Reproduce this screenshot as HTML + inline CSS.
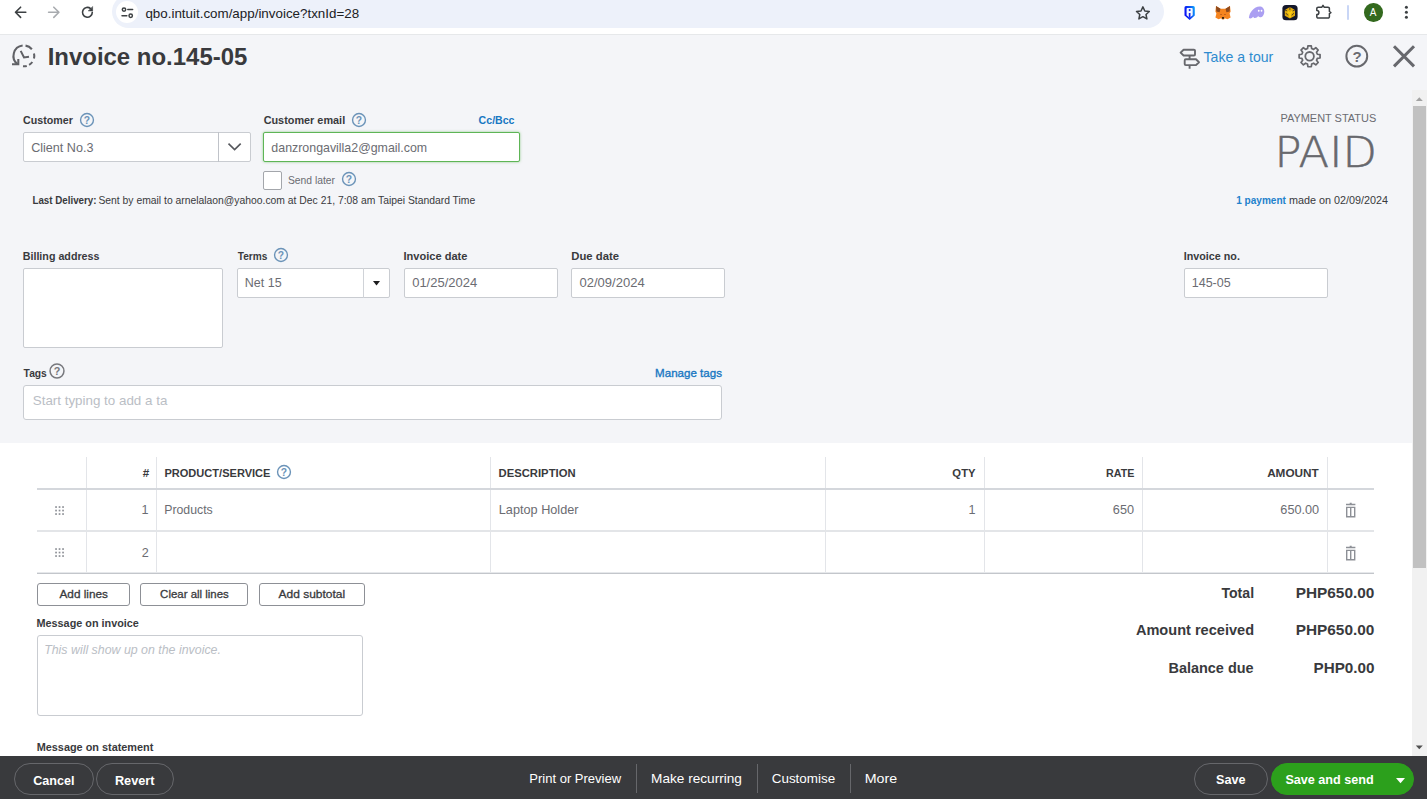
<!DOCTYPE html>
<html lang="en">
<head>
<meta charset="utf-8">
<title>Invoice no.145-05</title>
<style>
*{box-sizing:border-box;margin:0;padding:0}
html,body{width:1427px;height:799px;overflow:hidden;background:#f4f5f8;font-family:"Liberation Sans",sans-serif;color:#393a3d}
.a{position:absolute}
.t{position:absolute;white-space:nowrap;line-height:1;transform-origin:0 0}
svg{position:absolute;overflow:visible}
#chrome{position:absolute;left:0;top:0;width:1427px;height:35px;background:#fff;border-bottom:1px solid #e6e8ea}
#pill{position:absolute;left:112px;top:-5px;width:1052px;height:33px;border-radius:16.5px;background:#edf1fa}
#white{position:absolute;left:0;top:443px;width:1427px;height:313px;background:#fff}
#bar{position:absolute;left:0;top:756px;width:1427px;height:43px;background:#393a3d}
#sb{position:absolute;left:1412px;top:90px;width:15px;height:666px;background:#f1f1f1}
#sbthumb{position:absolute;left:1413px;top:106px;width:12.5px;height:462px;background:#c1c1c1}
.inp{position:absolute;background:#fff;border:1px solid #c9ccd1;border-radius:2px}
.btn{position:absolute;border:1px solid #8d9096;border-radius:3px;background:#fff;height:23px;top:583px}
.pill{position:absolute;top:763px;height:32px;border-radius:16px;border:1px solid #66676b}
.sep{position:absolute;top:764px;width:1px;height:29px;background:#66676b}
.vl{position:absolute;width:1px;background:#e3e5e9;top:457px;height:116px}
.hl{position:absolute;left:37px;width:1337px;height:2px;background:#d4d7dc}
</style>
</head>
<body>
<div id="chrome"><div id="pill"></div>
<div class="a" style="left:116px;top:1px;width:22px;height:22px;border-radius:50%;background:#fff"></div>
<div class="a" style="left:1347px;top:5px;width:2px;height:15px;background:#c9d6f6;border-radius:1px"></div>
<div class="a" style="left:1364px;top:3px;width:18.5px;height:18.5px;border-radius:50%;background:#33691e"></div>
</div>
<svg width="1427" height="34" style="left:0;top:0" fill="none" stroke-linecap="round" stroke-linejoin="round">
 <!-- back -->
 <path d="M25.8 12.3H15.6M20.6 7.2L15.5 12.3L20.6 17.4" stroke="#3c4043" stroke-width="1.6"/>
 <!-- forward -->
 <path d="M48.6 12.3H58.8M53.8 7.2L58.9 12.3L53.8 17.4" stroke="#a8abaf" stroke-width="1.6"/>
 <!-- reload -->
 <path d="M92.3 12.3A4.9 4.9 0 1 1 90.6 8.6" stroke="#3c4043" stroke-width="1.6"/>
 <path d="M92.6 6.9V10.9H88.6Z" fill="#3c4043" stroke="#3c4043" stroke-width="0.6"/>
 <!-- tune -->
 <g stroke="#3c4043" stroke-width="1.5"><circle cx="124" cy="9.6" r="1.7"/><path d="M127.8 9.6H132.6"/><circle cx="130.7" cy="15.8" r="1.7"/><path d="M122 15.8H126.8"/></g>
 <!-- star -->
 <path d="M142.9 6.9l1.9 4.1 4.5.5-3.3 3 .9 4.4-4-2.2-4 2.2.9-4.4-3.3-3 4.5-.5z" transform="translate(1000,0)" stroke="#3c4043" stroke-width="1.5"/>
<defs><linearGradient id="rg" x1="0" y1="0.3" x2="1" y2="0"><stop offset="0" stop-color="#0a10f5"/><stop offset="0.55" stop-color="#0a55f5"/><stop offset="1" stop-color="#12b0fb"/></linearGradient></defs>
 <!-- ronin shield -->
 <path d="M1186 5.9h7.3a1.500 1.500 0 0 1 1.500 1.500v8.200l-5.150 4.500-5.150-4.500v-8.200a1.500 1.500 0 0 1 1.500-1.500z" fill="url(#rg)" stroke="none"/>
 <path d="M1187.400 8.100h4.500a.8.8 0 0 1 .8.8v6.300l-3.050 2.500-3.050-2.500v-6.300a.8.8 0 0 1 .8-.8z" fill="#f4f8ff" stroke="none"/>
 <circle cx="1189.650" cy="10.100" r="1.050" fill="#1330f0" stroke="none"/>
 <path d="M1188.800 12.900h1.700v4.300l-.85.700-.85-.700z" fill="#1020f0" stroke="none"/>
 <!-- metamask -->
 <path d="M1216 6l4.500 2.700h5l4.500-2.700.6 5.500-1 2 1 4-3.100 1.800-2.700-1-.8 1.300h-2l-.8-1.300-2.700 1-3.100-1.800 1-4-1-2z" fill="#f5841f" stroke="none"/>
 <path d="M1216 6l4.500 2.700-.9 3.600-3.300-.7zM1230 6l-4.500 2.700.9 3.600 3.300-.7z" fill="#8e4a1e" stroke="none"/>
 <path d="M1220.300 14.100h1.500v.8h-1.500zM1224.200 14.100h1.500v.8h-1.500z" fill="#b9581c" stroke="none"/>
 <ellipse cx="1223" cy="17.900" rx="1.150" ry=".95" fill="#161616" stroke="none"/>
 <path d="M1222.100 19h1.800l-.3.700h-1.200z" fill="#d9c3b4" stroke="none"/>
 <!-- phantom -->
 <path d="M1248.900 18c.3-5.800 5.300-11.600 10.600-11.600 3 0 4.800 2.100 4.800 5 0 3.200-1.900 5.900-4.300 5.900-.9 0-1.500-.5-1.800-1.200-.7 1.100-1.900 2-3.200 2-.9 0-1.500-.5-1.800-1.300-.9 1.200-2.800 2.300-4.300 1.200z" fill="#ab9ff2" stroke="none"/>
 <rect x="1257.900" y="9.700" width="1.700" height="2.100" rx=".8" fill="#fff" stroke="none"/><rect x="1260.700" y="9.700" width="1.700" height="2.100" rx=".8" fill="#fff" stroke="none"/>
 <!-- black hex -->
 <rect x="1282.400" y="5" width="15.200" height="15.300" rx="3.600" fill="#14172a" stroke="none"/>
 <path d="M1289.900 7l5.100 2.900v5.800l-5.100 2.900-5.100-2.900V9.900z" fill="#e0a90c" stroke="none"/>
 <path d="M1287 10.300l2.900 1.700 2.900-1.700 .5 1.500-2.300 2v3.400h-2.200v-3.400l-2.300-2z" fill="#fbcb12" stroke="none"/>
 <path d="M1289.900 7v2.500M1284.800 9.900l2.200 1M1295 9.900l-2.200 1M1286.300 13.500l1.300 1.500M1293.500 13.500l-1.300 1.500" stroke="#14172a" stroke-width=".7"/>
 <!-- puzzle -->
 <path d="M1318.200 7.200h3.700l1.100-1.900 1.100 1.900h3.900a1.400 1.400 0 0 1 1.400 1.400v2.900l1.500 1.100-1.500 1.100v3a1.400 1.400 0 0 1 -1.400 1.400h-9.800a1.400 1.400 0 0 1 -1.400-1.400v-2.100a2.100 2.100 0 0 0 0-4.200v-1.800a1.400 1.400 0 0 1 1.400-1.400z" stroke="#3c4043" stroke-width="1.500" stroke-linejoin="round"/>
 <!-- dots -->
 <g fill="#3c4043" stroke="none"><circle cx="1406.400" cy="7.300" r="1.500"/><circle cx="1406.400" cy="12.300" r="1.500"/><circle cx="1406.400" cy="17.300" r="1.500"/></g>
</svg>

<!-- QBO header icons -->
<svg width="1427" height="45" style="left:0;top:36px" fill="none" stroke="#67686d" stroke-linecap="butt" stroke-linejoin="miter">
 <g transform="translate(0,-36)">
 <!-- history icon -->
 <g stroke="#606166">
 <path d="M22.63 45.58A10.40 10.40 0 0 0 17.64 64.21 M25.53 45.63A10.40 10.40 0 0 1 31.87 49.22 M33.99 53.38A10.40 10.40 0 0 1 33.99 58.42 M32.31 62.01A10.40 10.40 0 0 1 29.10 64.91 M26.77 65.90A10.40 10.40 0 0 1 22.99 66.26" stroke-width="2.05"/>
 <path d="M12.00 64.20H18.30V59.00" stroke-width="2.05"/>
 <path d="M20.7 50.9L24.0 57.5L29.0 56.7" stroke-width="2.0"/>
 </g>
 <!-- signpost -->
 <g stroke-width="1.9" stroke-linejoin="round">
 <path d="M1183.6 49.7h10.3a1.1 1.1 0 0 1 1.1 1.1v3.6a1.1 1.1 0 0 1 -1.1 1.1h-10.3l-3.0-2.9z"/>
 <path d="M1185.8 59.3h10.2l3.0 2.9-3.0 2.9h-10.2a1.1 1.1 0 0 1 -1.1 -1.1v-3.6a1.1 1.1 0 0 1 1.1 -1.1z"/>
 <path d="M1189.6 55.5v3.8M1189.6 65.1v3.6"/>
 </g>
 <!-- gear -->
 <g transform="translate(1309.600,56.300)">
  <circle r="4.300" stroke-width="1.800"/>
  <path id="gearp" stroke-width="1.700" stroke-linejoin="round" d="M-2.06 -7.73 L-1.69 -10.46 L1.69 -10.46 L2.06 -7.73 L4.01 -6.92 L6.21 -8.59 L8.59 -6.21 L6.92 -4.01 L7.73 -2.06 L10.46 -1.69 L10.46 1.69 L7.73 2.06 L6.92 4.01 L8.59 6.21 L6.21 8.59 L4.01 6.92 L2.06 7.73 L1.69 10.46 L-1.69 10.46 L-2.06 7.73 L-4.01 6.92 L-6.21 8.59 L-8.59 6.21 L-6.92 4.01 L-7.73 2.06 L-10.46 1.69 L-10.46 -1.69 L-7.73 -2.06 L-6.92 -4.01 L-8.59 -6.21 L-6.21 -8.59 L-4.01 -6.92Z"/>
 </g>
 <!-- help big -->
 <circle cx="1356.800" cy="56.200" r="10.400" stroke-width="2"/>
 <!-- close -->
 <path d="M1394.000 46.300L1414.000 66.400M1414.000 46.300L1394.000 66.400" stroke-width="3"/>
 </g>
</svg>
<div class="t" style="left:1352.6px;top:48.600px;font-size:15px;font-weight:bold;color:#6b6c72">?</div>

<!-- form boxes -->
<div class="inp" style="left:23px;top:132px;width:228px;height:30px"></div>
<div class="a" style="left:217.500px;top:132px;width:1.500px;height:30px;background:#c0c3c9"></div>
<svg width="14" height="8" style="left:227.500px;top:143px" fill="none" stroke="#55575c" stroke-width="1.600"><path d="M0.500 0.700L6.600 6.600L12.700 0.700"/></svg>
<div class="inp" style="left:263px;top:132px;width:256.500px;height:30px;border:1px solid #5eb556;box-shadow:0 0 2.5px rgba(94,181,86,.7)"></div>
<div class="inp" style="left:263px;top:171px;width:19px;height:19px;border-color:#a3a6ab"></div>
<div class="inp" style="left:23px;top:268px;width:200px;height:80px"></div>
<div class="inp" style="left:237px;top:268px;width:153px;height:30px"></div>
<div class="a" style="left:362.500px;top:268px;width:1.300px;height:30px;background:#d0d3d8"></div>
<svg width="8" height="5" style="left:372.500px;top:280.600px"><path d="M0 0H7L3.500 4.400Z" fill="#1d1d1f"/></svg>
<div class="inp" style="left:404px;top:268px;width:153.500px;height:30px"></div>
<div class="inp" style="left:571px;top:268px;width:154px;height:30px"></div>
<div class="inp" style="left:1184px;top:268px;width:144px;height:30px"></div>
<div class="inp" style="left:23px;top:385px;width:699px;height:34.500px;border-radius:3px"></div>

<!-- help icons -->
<svg width="18" height="18" style="left:78.10px;top:110.70px"><circle cx="9" cy="9" r="6.45" fill="none" stroke="#6b93b8" stroke-width="1.40"/><text x="9" y="12.80" text-anchor="middle" font-family="Liberation Sans, sans-serif" font-size="10.3" font-weight="bold" fill="#6b93b8">?</text></svg>
<svg width="18" height="18" style="left:349.50px;top:110.80px"><circle cx="9" cy="9" r="6.45" fill="none" stroke="#6b93b8" stroke-width="1.40"/><text x="9" y="12.80" text-anchor="middle" font-family="Liberation Sans, sans-serif" font-size="10.3" font-weight="bold" fill="#6b93b8">?</text></svg>
<svg width="18" height="18" style="left:339.80px;top:170.30px"><circle cx="9" cy="9" r="6.45" fill="none" stroke="#6b93b8" stroke-width="1.40"/><text x="9" y="12.80" text-anchor="middle" font-family="Liberation Sans, sans-serif" font-size="10.3" font-weight="bold" fill="#6b93b8">?</text></svg>
<svg width="18" height="18" style="left:272.20px;top:246.40px"><circle cx="9" cy="9" r="6.45" fill="none" stroke="#6b93b8" stroke-width="1.40"/><text x="9" y="12.80" text-anchor="middle" font-family="Liberation Sans, sans-serif" font-size="10.3" font-weight="bold" fill="#6b93b8">?</text></svg>
<svg width="18" height="18" style="left:48.25px;top:362.00px"><circle cx="9" cy="9" r="6.95" fill="none" stroke="#77787d" stroke-width="1.50"/><text x="9" y="12.80" text-anchor="middle" font-family="Liberation Sans, sans-serif" font-size="10.8" font-weight="bold" fill="#77787d">?</text></svg>

<div id="white"></div>
<svg width="18" height="18" style="left:275.00px;top:463.00px"><circle cx="9" cy="9" r="6.45" fill="none" stroke="#6b93b8" stroke-width="1.40"/><text x="9" y="12.80" text-anchor="middle" font-family="Liberation Sans, sans-serif" font-size="10.3" font-weight="bold" fill="#6b93b8">?</text></svg>
<!-- table -->
<div class="vl" style="left:86px"></div><div class="vl" style="left:156px"></div><div class="vl" style="left:490px"></div><div class="vl" style="left:825px"></div><div class="vl" style="left:983.500px"></div><div class="vl" style="left:1141.500px"></div><div class="vl" style="left:1326.500px"></div>
<div class="hl" style="top:488px"></div><div class="hl" style="top:530px;background:#e3e5e8"></div><div class="hl" style="top:572px;height:1px;background:#e6e8eb"></div><div class="hl" style="top:573px;height:1px;background:#c3c6cb"></div>
<svg width="10" height="10" style="left:55.300px;top:506.100px" fill="#8d9096"><g id="dots"><rect x="0.200" y="0.200" width="1.700" height="1.700"/><rect x="3.700" y="0.200" width="1.700" height="1.700"/><rect x="7.200" y="0.200" width="1.700" height="1.700"/><rect x="0.200" y="3.700" width="1.700" height="1.700"/><rect x="3.700" y="3.700" width="1.700" height="1.700"/><rect x="7.200" y="3.700" width="1.700" height="1.700"/><rect x="0.200" y="7.200" width="1.700" height="1.700"/><rect x="3.700" y="7.200" width="1.700" height="1.700"/><rect x="7.200" y="7.200" width="1.700" height="1.700"/></g></svg>
<svg width="10" height="10" style="left:55.300px;top:548.300px" fill="#8d9096"><rect x="0.200" y="0.200" width="1.700" height="1.700"/><rect x="3.700" y="0.200" width="1.700" height="1.700"/><rect x="7.200" y="0.200" width="1.700" height="1.700"/><rect x="0.200" y="3.700" width="1.700" height="1.700"/><rect x="3.700" y="3.700" width="1.700" height="1.700"/><rect x="7.200" y="3.700" width="1.700" height="1.700"/><rect x="0.200" y="7.200" width="1.700" height="1.700"/><rect x="3.700" y="7.200" width="1.700" height="1.700"/><rect x="7.200" y="7.200" width="1.700" height="1.700"/></svg>
<svg width="10" height="15" style="left:1346px;top:503.200px" fill="none" stroke="#8d9096"><path d="M0 1.600H9.400M3.700 0.500H5.700" stroke-width="1.500"/><path d="M0.700 4.400H8.700V13.800H0.700ZM4.700 4.400V13.800" stroke-width="1.400"/></svg>
<svg width="10" height="15" style="left:1346px;top:545.600px" fill="none" stroke="#8d9096"><path d="M0 1.600H9.400M3.700 0.500H5.700" stroke-width="1.500"/><path d="M0.700 4.400H8.700V13.800H0.700ZM4.700 4.400V13.800" stroke-width="1.400"/></svg>

<div class="btn" style="left:37px;width:93px"></div>
<div class="btn" style="left:140px;width:108px"></div>
<div class="btn" style="left:258.500px;width:106px"></div>
<div class="inp" style="left:37px;top:635px;width:325.500px;height:80.500px;border-radius:3px"></div>

<div id="sb"></div><div id="sbthumb"></div>
<svg width="15" height="10" style="left:1412px;top:95px"><path d="M3.800 6.100H10.800L7.300 2.300Z" fill="#a3a3a3"/></svg>
<svg width="15" height="10" style="left:1412px;top:743px"><path d="M3.800 2.500H10.800L7.300 6.300Z" fill="#505050"/></svg>
<div id="bar"></div>
<div class="pill" style="left:14px;width:79.500px"></div>
<div class="pill" style="left:95.500px;width:78px"></div>
<div class="sep" style="left:636px"></div>
<div class="sep" style="left:756.500px"></div>
<div class="sep" style="left:849.500px"></div>
<div class="pill" style="left:1193.500px;width:74.500px"></div>
<div class="pill" style="left:1271px;width:142.500px;background:#2ca01c;border-color:#2ca01c"></div>
<svg width="10" height="6" style="left:1396px;top:778px"><path d="M0 0H9L4.500 5.300Z" fill="#fff"/></svg>
<div class="t" id="url" style="left:145px;top:7px;font-size:13.2px;color:#202124;transform:translateX(0.39px) scaleX(1.0140);">qbo.intuit.com/app/invoice?txnId=28</div>
<div class="t" id="title" style="left:47px;top:46px;font-size:23.2px;color:#393a3d;font-weight:bold;transform:translateX(0.63px) scaleX(1.0332);">Invoice no.145-05</div>
<div class="t" id="tour" style="left:1203px;top:50px;font-size:14.3px;color:#2e8bcf;transform:translateX(0.49px) scaleX(0.9866);">Take a tour</div>
<div class="t" id="l_cust" style="left:23px;top:115px;font-size:11.2px;color:#393a3d;font-weight:bold;transform:translateX(0.03px) scaleX(0.9543);">Customer</div>
<div class="t" id="v_cust" style="left:31px;top:142px;font-size:12.6px;color:#6b6c72;transform:translateX(0.13px) scaleX(0.9997);">Client No.3</div>
<div class="t" id="l_email" style="left:263px;top:115px;font-size:11.2px;color:#393a3d;font-weight:bold;transform:translateX(0.64px) scaleX(0.9711);">Customer email</div>
<div class="t" id="ccbcc" style="left:478px;top:115px;font-size:11.2px;color:#1877c2;font-weight:bold;transform:translateX(0.61px) scaleX(0.9459);">Cc/Bcc</div>
<div class="t" id="v_email" style="left:271px;top:142px;font-size:12.4px;color:#6b6c72;transform:translateX(0.36px) scaleX(0.9998);">danzrongavilla2@gmail.com</div>
<div class="t" id="sendlater" style="left:287px;top:176px;font-size:10.4px;color:#6b6c72;transform:translateX(0.98px) scaleX(0.9934);">Send later</div>
<div class="t" id="lastdel" style="left:32px;top:196px;font-size:10.4px;color:#393a3d;font-weight:bold;transform:translateX(0.43px) scaleX(0.9408);">Last Delivery:</div>
<div class="t" id="lastdel2" style="left:98px;top:196px;font-size:10.4px;color:#393a3d;transform:translateX(0.42px) scaleX(0.9961);">Sent by email to arnelalaon@yahoo.com at Dec 21, 7:08 am Taipei Standard Time</div>
<div class="t" id="paystat" style="left:1280px;top:112px;font-size:11.7px;color:#6b6c72;transform:translateX(0.39px) scaleX(0.9379);">PAYMENT STATUS</div>
<div class="t" id="paid" style="left:1274px;top:132px;font-size:42.5px;color:#67686d;transform:translateX(0.48px) scaleX(1.0530);font-family:'DejaVu Sans',sans-serif;font-weight:200;-webkit-text-stroke:0.55px #67686d;">PAID</div>
<div class="t" id="payment" style="left:1236px;top:196px;font-size:10.4px;color:#1f82cc;font-weight:bold;transform:translateX(0.18px) scaleX(0.9674);">1 payment</div>
<div class="t" id="payment2" style="left:1288px;top:196px;font-size:10.4px;color:#393a3d;transform:translateX(0.88px) scaleX(1.0396);">made on 02/09/2024</div>
<div class="t" id="l_bill" style="left:22px;top:251px;font-size:11.2px;color:#393a3d;font-weight:bold;transform:translateX(0.70px) scaleX(0.9574);">Billing address</div>
<div class="t" id="l_terms" style="left:237px;top:251px;font-size:11.2px;color:#393a3d;font-weight:bold;transform:translateX(0.72px) scaleX(0.9040);">Terms</div>
<div class="t" id="v_terms" style="left:244px;top:277px;font-size:12.6px;color:#6b6c72;transform:translateX(0.79px) scaleX(0.9923);">Net 15</div>
<div class="t" id="l_invd" style="left:403px;top:251px;font-size:11.2px;color:#393a3d;font-weight:bold;transform:translateX(0.47px) scaleX(0.9886);">Invoice date</div>
<div class="t" id="v_invd" style="left:412px;top:276px;font-size:13px;color:#6b6c72;transform:translateX(0.17px) scaleX(0.9986);">01/25/2024</div>
<div class="t" id="l_due" style="left:571px;top:251px;font-size:11.2px;color:#393a3d;font-weight:bold;transform:translateX(0.26px) scaleX(1.0106);">Due date</div>
<div class="t" id="v_due" style="left:579px;top:276px;font-size:13px;color:#6b6c72;transform:translateX(0.45px) scaleX(1.0016);">02/09/2024</div>
<div class="t" id="l_invno" style="left:1183px;top:251px;font-size:11.2px;color:#393a3d;font-weight:bold;transform:translateX(0.76px) scaleX(0.9611);">Invoice no.</div>
<div class="t" id="v_invno" style="left:1191px;top:276px;font-size:13px;color:#6b6c72;transform:translateX(0.76px) scaleX(0.9617);">145-05</div>
<div class="t" id="l_tags" style="left:23px;top:368px;font-size:11.2px;color:#393a3d;font-weight:bold;transform:translateX(0.62px) scaleX(0.9178);">Tags</div>
<div class="t" id="mtags" style="left:655px;top:368px;font-size:11.8px;color:#1877c2;transform:translateX(0.11px) scaleX(0.9797);-webkit-text-stroke:0.35px #1877c2;">Manage tags</div>
<div class="t" id="ph_tags" style="left:32px;top:394px;font-size:13.3px;color:#babec5;transform:translateX(0.74px) scaleX(1.0060);">Start typing to add a ta</div>
<div class="t" id="h_num" style="left:142px;top:467px;font-size:11.6px;color:#393a3d;font-weight:bold;transform:translateX(0.70px) scaleX(1.0000);">#</div>
<div class="t" id="h_prod" style="left:164px;top:467px;font-size:11.6px;color:#393a3d;font-weight:bold;transform:translateX(0.38px) scaleX(0.9539);">PRODUCT/SERVICE</div>
<div class="t" id="h_desc" style="left:498px;top:467px;font-size:11.6px;color:#393a3d;font-weight:bold;transform:translateX(0.59px) scaleX(0.9710);">DESCRIPTION</div>
<div class="t" id="h_qty" style="left:952px;top:467px;font-size:11.6px;color:#393a3d;font-weight:bold;transform:translateX(0.37px) scaleX(0.9711);">QTY</div>
<div class="t" id="h_rate" style="left:1105px;top:467px;font-size:11.6px;color:#393a3d;font-weight:bold;transform:translateX(0.98px) scaleX(0.9251);">RATE</div>
<div class="t" id="h_amt" style="left:1267px;top:467px;font-size:11.6px;color:#393a3d;font-weight:bold;transform:translateX(0.13px) scaleX(1.0141);">AMOUNT</div>
<div class="t" id="r1_num" style="left:141px;top:504px;font-size:12.6px;color:#6b6c72;transform:translateX(0.44px) scaleX(1.0000);">1</div>
<div class="t" id="r1_prod" style="left:164px;top:504px;font-size:12.6px;color:#6b6c72;transform:translateX(0.26px) scaleX(0.9752);">Products</div>
<div class="t" id="r1_desc" style="left:498px;top:504px;font-size:12.6px;color:#6b6c72;transform:translateX(0.79px) scaleX(1.0077);">Laptop Holder</div>
<div class="t" id="r1_qty" style="left:968px;top:504px;font-size:12.6px;color:#6b6c72;transform:translateX(0.44px) scaleX(1.0000);">1</div>
<div class="t" id="r1_rate" style="left:1112px;top:504px;font-size:12.6px;color:#6b6c72;transform:translateX(0.87px) scaleX(1.0092);">650</div>
<div class="t" id="r1_amt" style="left:1280px;top:504px;font-size:12.6px;color:#6b6c72;transform:translateX(0.32px) scaleX(1.0085);">650.00</div>
<div class="t" id="r2_num" style="left:141px;top:547px;font-size:12.6px;color:#6b6c72;transform:translateX(0.65px) scaleX(1.0000);">2</div>
<div class="t" id="b_add" style="left:59px;top:588px;font-size:11.7px;color:#393a3d;transform:translateX(0.52px) scaleX(1.0076);-webkit-text-stroke:0.3px #393a3d;">Add lines</div>
<div class="t" id="b_clear" style="left:160px;top:588px;font-size:11.7px;color:#393a3d;transform:translateX(0.12px) scaleX(0.9787);-webkit-text-stroke:0.3px #393a3d;">Clear all lines</div>
<div class="t" id="b_sub" style="left:278px;top:588px;font-size:11.7px;color:#393a3d;transform:translateX(0.52px) scaleX(1.0258);-webkit-text-stroke:0.3px #393a3d;">Add subtotal</div>
<div class="t" id="tot_l" style="left:1221px;top:585px;font-size:15px;color:#393a3d;font-weight:bold;transform:translateX(0.42px) scaleX(0.9402);">Total</div>
<div class="t" id="tot_v" style="left:1295px;top:585px;font-size:15px;color:#393a3d;font-weight:bold;transform:translateX(0.67px) scaleX(1.0255);">PHP650.00</div>
<div class="t" id="rec_l" style="left:1135px;top:622px;font-size:15px;color:#393a3d;font-weight:bold;transform:translateX(0.88px) scaleX(0.9711);">Amount received</div>
<div class="t" id="rec_v" style="left:1295px;top:622px;font-size:15px;color:#393a3d;font-weight:bold;transform:translateX(0.67px) scaleX(1.0255);">PHP650.00</div>
<div class="t" id="bal_l" style="left:1168px;top:660px;font-size:15px;color:#393a3d;font-weight:bold;transform:translateX(0.46px) scaleX(0.9634);">Balance due</div>
<div class="t" id="bal_v" style="left:1313px;top:660px;font-size:15px;color:#393a3d;font-weight:bold;transform:translateX(0.55px) scaleX(1.0156);">PHP0.00</div>
<div class="t" id="l_msg" style="left:36px;top:618px;font-size:11.2px;color:#393a3d;font-weight:bold;transform:translateX(0.51px) scaleX(0.9681);">Message on invoice</div>
<div class="t" id="ph_msg" style="left:44px;top:644px;font-size:12.4px;color:#babec5;transform:translateX(0.17px) scaleX(0.9984);font-style:italic;">This will show up on the invoice.</div>
<div class="t" id="l_stmt" style="left:36px;top:742px;font-size:11.2px;color:#393a3d;font-weight:bold;transform:translateX(0.67px) scaleX(0.9724);">Message on statement</div>
<div class="t" id="cancel" style="left:33px;top:774px;font-size:13.1px;color:#fff;font-weight:bold;transform:translateX(0.23px) scaleX(0.9618);">Cancel</div>
<div class="t" id="revert" style="left:114px;top:774px;font-size:13.1px;color:#fff;font-weight:bold;transform:translateX(0.88px) scaleX(0.9714);">Revert</div>
<div class="t" id="print" style="left:529px;top:772px;font-size:13.4px;color:#fff;transform:translateX(0.32px) scaleX(0.9714);">Print or Preview</div>
<div class="t" id="recur" style="left:651px;top:772px;font-size:13.4px;color:#fff;transform:translateX(0.11px) scaleX(1.0172);">Make recurring</div>
<div class="t" id="custom" style="left:771px;top:772px;font-size:13.4px;color:#fff;transform:translateX(0.70px) scaleX(1.0036);">Customise</div>
<div class="t" id="more" style="left:864px;top:772px;font-size:13.4px;color:#fff;transform:translateX(0.71px) scaleX(1.0607);">More</div>
<div class="t" id="save" style="left:1216px;top:773px;font-size:13.1px;color:#fff;font-weight:bold;transform:translateX(0.04px) scaleX(0.9631);">Save</div>
<div class="t" id="savesend" style="left:1285px;top:773px;font-size:13.1px;color:#fff;font-weight:bold;transform:translateX(0.39px) scaleX(0.9634);">Save and send</div>
<div class="t" id="avatar" style="left:1369px;top:8px;font-size:10px;color:#fff;transform:translateX(0.67px) scaleX(1.0000);">A</div>
</body>
</html>
